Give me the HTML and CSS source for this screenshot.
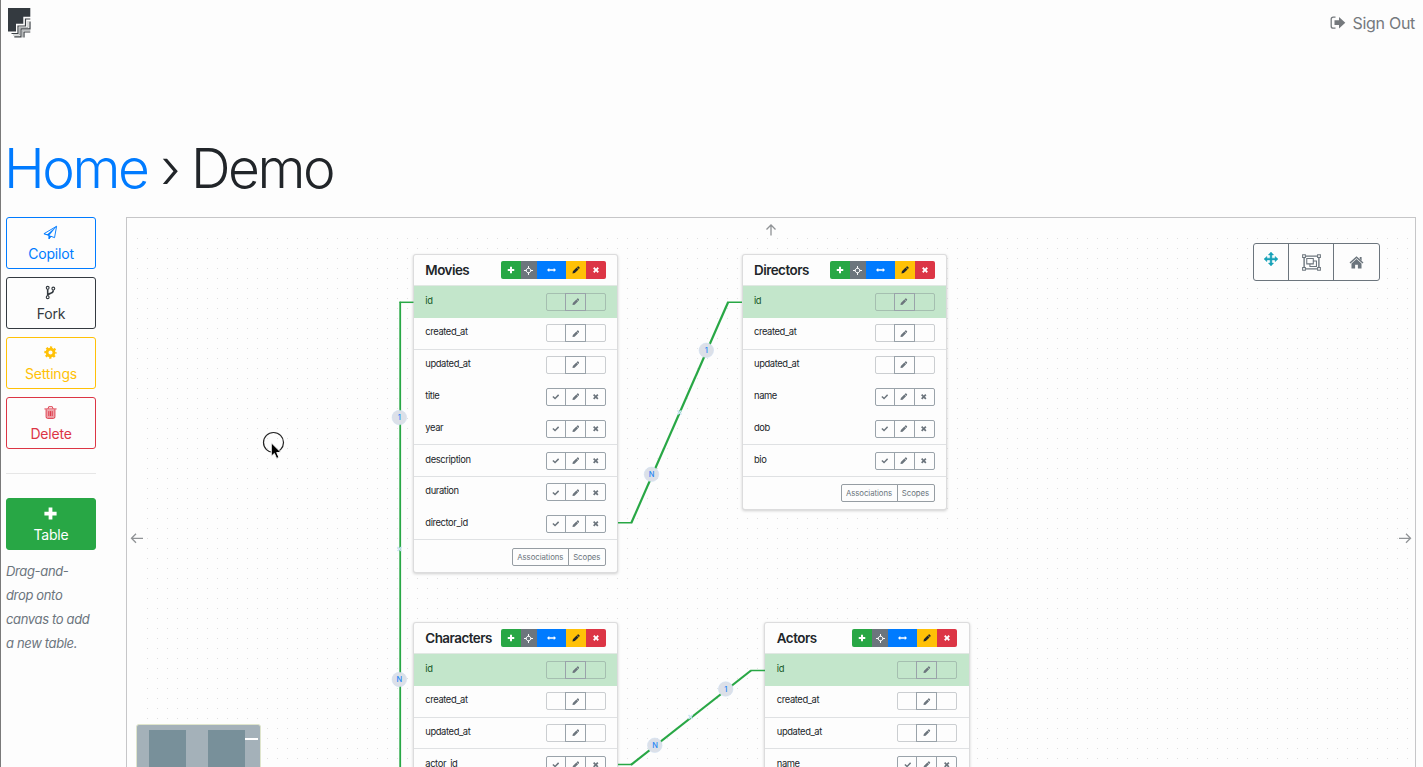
FILE: index.html
```html
<!DOCTYPE html>
<html lang="en">
<head>
<meta charset="utf-8">
<title>Demo</title>
<link rel="stylesheet" href="styles.css">
</head>
<body>
<svg class="sprite" aria-hidden="true">
  <symbol id="plus" viewBox="0 0 16 16"><path d="M6 1.500h4V6h4.500v4H10v4.500H6V10H1.500V6H6z"/></symbol>
  <symbol id="times" viewBox="0 0 16 16"><path d="M4.800 2.200 8 5.400l3.200-3.200 2.600 2.600L10.600 8l3.200 3.200-2.600 2.600L8 10.600l-3.200 3.200-2.600-2.600L5.400 8 2.200 4.800z"/></symbol>
  <symbol id="check" viewBox="0 0 16 16"><path d="M.8 8.500 3 6.200l3.500 3.200L13 2.800l2.300 2.300-8.800 8.800z"/></symbol>
  <symbol id="pencil" viewBox="0 0 16 16"><path d="M1 15l.8-4.600L9.200 3l3.800 3.800-7.400 7.400zM9.800 2.400l1.700-1.600q.9-.7 1.700 0l2 2q.7.800 0 1.700L13.600 6.200z"/></symbol>
  <symbol id="width" viewBox="0 0 20 12"><path d="M0 6 5 1.500V4.600h10V1.500L20 6l-5 4.500V7.400H5v3.100z"/></symbol>
  <symbol id="target" viewBox="0 0 16 16"><path d="M8 0v5M8 11v5M0 8h5M11 8h5M8 2.500 13.500 8 8 13.500 2.500 8z" fill="none" stroke="currentColor" stroke-width="1.700"/></symbol>
</svg>

<header class="topbar">
  <svg class="logo" viewBox="0 0 24 31">
    <path d="M0 0h22.300v8.800h-7v6.900H8V23.500H0z" fill="#343a40"/>
    <path d="M22.300 11h-4.800v7H10v7.500H3.500M22 13.500v7.300h-9V28.800H6.300M22.300 24H16v5.500" fill="none" stroke="#3c4145" stroke-width="1.200"/>
    <path d="M20 13v6.500h-8.500V27H5M22.300 22.400H14.500v7" fill="none" stroke="#85898c" stroke-width=".6"/>
  </svg>
  <a class="signout"><svg viewBox="0 0 16 14"><path d="M5.500 1.200H3.200Q1.200 1.200 1.200 3.200v7q0 2 2 2h2.300" fill="none" stroke="currentColor" stroke-width="1.300"/><path d="M4.500 4.300H9V1l6.300 5.700L9 12.400V9.100H4.500z" fill="currentColor"/></svg>Sign Out</a>
</header>

<h1 class="title"><a>Home</a> <span class="sep">›</span> <span>Demo</span></h1>

<main class="workspace">
  <aside class="sidebar">
    <button class="btn blue"><svg viewBox="0 0 16 16"><path d="M1 9.300 14.500 1.300 12.300 13.500 8.500 12 6.400 14.700V11z" fill="none" stroke="currentColor"/><path d="M1 9.300 4.300 10.500 14 1.800 6.400 11.300V15l2.300-3z" fill="currentColor" stroke="currentColor" stroke-width=".4"/></svg><span>Copilot</span></button>
    <button class="btn dark"><svg viewBox="0 0 16 16"><g fill="none" stroke="currentColor" stroke-width="1.200"><circle cx="5" cy="3" r="1.500"/><circle cx="11" cy="3.800" r="1.500"/><circle cx="5" cy="13" r="1.500"/><path d="M5 4.500v7M11 5.500q0 2.500-3 3.400-3 .6-3 2.600" stroke-width="1.700"/></g></svg><span>Fork</span></button>
    <button class="btn yellow"><svg viewBox="0 0 16 16"><circle cx="8" cy="8" r="3.700" fill="none" stroke="currentColor" stroke-width="3"/><circle cx="8" cy="8" r="5.500" fill="none" stroke="currentColor" stroke-width="2.200" stroke-dasharray="2.300 2.020" stroke-dashoffset="1.150"/></svg><span>Settings</span></button>
    <button class="btn red"><svg viewBox="0 0 16 16"><path d="M3.500 5h9v9h-9z" fill="currentColor" opacity=".45"/><path d="M1.500 4.200h13M3.300 4.500v8q0 1.800 1.400 1.800h6.600q1.400 0 1.400-1.800v-8M5.300 4 6.100 1.800h3.800l.8 2.200M6.200 6.500v5.300M8 6.500v5.300M9.800 6.500v5.300" fill="none" stroke="currentColor"/></svg><span>Delete</span></button>
    <hr>
    <button class="btn solid"><svg viewBox="0 0 16 16"><use href="#plus"/></svg><span>Table</span></button>
    <p class="hint">Drag-and-<br>drop onto<br>canvas to add<br>a new table.</p>
  </aside>

  <section class="canvas">
    <div class="dots"></div><div class="dots edge"></div>

    <article class="card movies">
      <header><h2>Movies</h2><div class="tools"><i><svg><use href="#plus"/></svg></i><i><svg><use href="#target"/></svg></i><i><svg><use href="#width"/></svg></i><i><svg><use href="#pencil"/></svg></i><i><svg><use href="#times"/></svg></i></div></header>
      <div class="row key"><span>id</span><div class="acts off"><i></i><i><svg><use href="#pencil"/></svg></i><i></i></div></div>
      <div class="row line"><span>created_at</span><div class="acts off"><i></i><i><svg><use href="#pencil"/></svg></i><i></i></div></div>
      <div class="row"><span>updated_at</span><div class="acts off"><i></i><i><svg><use href="#pencil"/></svg></i><i></i></div></div>
      <div class="row"><span>title</span><div class="acts"><i><svg><use href="#check"/></svg></i><i><svg><use href="#pencil"/></svg></i><i><svg><use href="#times"/></svg></i></div></div>
      <div class="row line"><span>year</span><div class="acts"><i><svg><use href="#check"/></svg></i><i><svg><use href="#pencil"/></svg></i><i><svg><use href="#times"/></svg></i></div></div>
      <div class="row line"><span>description</span><div class="acts"><i><svg><use href="#check"/></svg></i><i><svg><use href="#pencil"/></svg></i><i><svg><use href="#times"/></svg></i></div></div>
      <div class="row"><span>duration</span><div class="acts"><i><svg><use href="#check"/></svg></i><i><svg><use href="#pencil"/></svg></i><i><svg><use href="#times"/></svg></i></div></div>
      <div class="row line"><span>director_id</span><div class="acts"><i><svg><use href="#check"/></svg></i><i><svg><use href="#pencil"/></svg></i><i><svg><use href="#times"/></svg></i></div></div>
      <footer><b>Associations</b><b>Scopes</b></footer>
    </article>

    <article class="card directors">
      <header><h2>Directors</h2><div class="tools"><i><svg><use href="#plus"/></svg></i><i><svg><use href="#target"/></svg></i><i><svg><use href="#width"/></svg></i><i><svg><use href="#pencil"/></svg></i><i><svg><use href="#times"/></svg></i></div></header>
      <div class="row key"><span>id</span><div class="acts off"><i></i><i><svg><use href="#pencil"/></svg></i><i></i></div></div>
      <div class="row line"><span>created_at</span><div class="acts off"><i></i><i><svg><use href="#pencil"/></svg></i><i></i></div></div>
      <div class="row"><span>updated_at</span><div class="acts off"><i></i><i><svg><use href="#pencil"/></svg></i><i></i></div></div>
      <div class="row"><span>name</span><div class="acts"><i><svg><use href="#check"/></svg></i><i><svg><use href="#pencil"/></svg></i><i><svg><use href="#times"/></svg></i></div></div>
      <div class="row line"><span>dob</span><div class="acts"><i><svg><use href="#check"/></svg></i><i><svg><use href="#pencil"/></svg></i><i><svg><use href="#times"/></svg></i></div></div>
      <div class="row line"><span>bio</span><div class="acts"><i><svg><use href="#check"/></svg></i><i><svg><use href="#pencil"/></svg></i><i><svg><use href="#times"/></svg></i></div></div>
      <footer><b>Associations</b><b>Scopes</b></footer>
    </article>

    <article class="card characters">
      <header><h2>Characters</h2><div class="tools"><i><svg><use href="#plus"/></svg></i><i><svg><use href="#target"/></svg></i><i><svg><use href="#width"/></svg></i><i><svg><use href="#pencil"/></svg></i><i><svg><use href="#times"/></svg></i></div></header>
      <div class="row key"><span>id</span><div class="acts off"><i></i><i><svg><use href="#pencil"/></svg></i><i></i></div></div>
      <div class="row line"><span>created_at</span><div class="acts off"><i></i><i><svg><use href="#pencil"/></svg></i><i></i></div></div>
      <div class="row line"><span>updated_at</span><div class="acts off"><i></i><i><svg><use href="#pencil"/></svg></i><i></i></div></div>
      <div class="row"><span>actor_id</span><div class="acts"><i><svg><use href="#check"/></svg></i><i><svg><use href="#pencil"/></svg></i><i><svg><use href="#times"/></svg></i></div></div>
    </article>

    <article class="card actors">
      <header><h2>Actors</h2><div class="tools"><i><svg><use href="#plus"/></svg></i><i><svg><use href="#target"/></svg></i><i><svg><use href="#width"/></svg></i><i><svg><use href="#pencil"/></svg></i><i><svg><use href="#times"/></svg></i></div></header>
      <div class="row key"><span>id</span><div class="acts off"><i></i><i><svg><use href="#pencil"/></svg></i><i></i></div></div>
      <div class="row line"><span>created_at</span><div class="acts off"><i></i><i><svg><use href="#pencil"/></svg></i><i></i></div></div>
      <div class="row line"><span>updated_at</span><div class="acts off"><i></i><i><svg><use href="#pencil"/></svg></i><i></i></div></div>
      <div class="row"><span>name</span><div class="acts"><i><svg><use href="#check"/></svg></i><i><svg><use href="#pencil"/></svg></i><i><svg><use href="#times"/></svg></i></div></div>
    </article>

    <svg class="links" viewBox="127 218 1288 549">
      <g class="wire">
        <path d="M400.200 767V301.700"/><path class="thin" d="M399.500 302.300H413.500"/>
        <path class="thin" d="M618 522.700H632M727.500 302.300H742"/><path class="slant" d="M631.300 523 728.200 302"/>
        <path class="thin" d="M618 764.500H632M750.500 670.500H765"/><path class="slant" d="M631 764.800 751 670.500"/>
      </g>
      <g class="mark"><path d="M397.500 547l4 4m0-4-4 4M677.500 410.500l4 4m0-4-4 4M688.500 715l4 4m0-4-4 4"/></g>
      <g class="pill">
        <circle cx="399.300" cy="417.500" r="7.300"/><circle cx="399.300" cy="679.500" r="7.300"/>
        <circle cx="706.300" cy="350.300" r="7.300"/><circle cx="651.500" cy="474.300" r="7.300"/>
        <circle cx="725.700" cy="689" r="7.300"/><circle cx="654.800" cy="745.300" r="7.300"/>
      </g>
      <g class="count">
        <text x="399.300" y="420.200">1</text><text x="399.300" y="682.200">N</text>
        <text x="706.300" y="353">1</text><text x="651.700" y="477">N</text>
        <text x="725.900" y="691.700">1</text><text x="655" y="748">N</text>
      </g>
      <g class="arrows"><path d="M771 235.500V225M766.500 229.500l4.500-4.500 4.500 4.500M143 538.300H131.800M136 533.800l-4.500 4.500 4.500 4.500M1399 538.300H1410.200M1406 533.800l4.500 4.500-4.500 4.500"/></g>
      <circle cx="273.500" cy="442.500" r="10" fill="none" stroke="#222" stroke-width="1.200"/>
      <path d="M271.300 442.800v13.400l3.100-2.800 2.200 5 2.300-1-2.200-4.900h4.300z" fill="#000" stroke="#fff" stroke-width=".9"/>
    </svg>

    <div class="toolbar">
      <button class="move"><svg viewBox="0 0 16 16"><path d="M8 0l3 3.300H9v3.700h3.700V5L16 8l-3.300 3V9H9v3.700h2L8 16l-3-3.300h2V9H3.300v2L0 8l3.300-3v2H7V3.300H5z" fill="currentColor" stroke="currentColor" stroke-width=".5"/></svg></button>
      <button class="group"><svg viewBox="0 0 18 16"><g fill="none" stroke="currentColor"><path d="M2 2h14v12H2z" stroke-width="1.300"/><path d="M4.500 4.300h6.200v5H4.500zM10.700 6.500h3v5.200H7.500V9.300"/><path d="M.6.600h2.600v2.600H.6zM14.800.600h2.600v2.600h-2.600zM.6 12.800h2.600v2.600H.6zM14.800 12.800h2.600v2.600h-2.600z" fill="#fdfdfd"/></g></svg></button>
      <button class="home"><svg viewBox="0 0 16 14"><path d="M8 3.200 13.400 8v5.500H9.500V9.300h-3v4.200H2.600V8z" fill="currentColor"/><path d="M1 7.500 8 1.300l7 6.200" fill="none" stroke="currentColor" stroke-width="1.600"/><path d="M11.500 1h2v4l-2-1.800z" fill="currentColor"/></svg></button>
    </div>

    <div class="minimap"><i></i><i></i><b></b></div>
  </section>
</main>
</body>
</html>
```

FILE: styles.css
```css
* { box-sizing: border-box; }
body {
  margin: 0; height: 767px; overflow: hidden;
  border-left: 1px solid #7a7a7a;
  background: #fdfdfd; color: #212529;
  font-family: Inter, "Liberation Sans", sans-serif;
}
.sprite { display: none; }
button { font: inherit; background: none; margin: 0; padding: 0; }

.topbar { display: flex; justify-content: space-between; align-items: flex-start; height: 141px; padding: 8px 8px 0 7px; }
.logo { width: 24px; height: 31px; }
.signout { display: flex; align-items: center; gap: 7px; height: 29px; font-size: 16px; letter-spacing: -.3px; color: #75797d; }
.signout svg { width: 16px; height: 14px; }

.title { margin: 0; height: 76px; padding-left: 3px; font-size: 55px; line-height: 54px; font-weight: 300; letter-spacing: -2.450px; white-space: nowrap; }
.title a { color: #007bff; }

.workspace { display: flex; gap: 30px; height: 550px; padding: 0 7px 0 5px; }
.sidebar { width: 90px; flex: none; }
.btn { display: flex; flex-direction: column; align-items: center; width: 90px; height: 52px; margin-bottom: 8px; padding-top: 7px; border: 1px solid currentColor; border-radius: 3px; font-size: 14px; letter-spacing: -.2px; }
.btn svg { width: 15px; height: 15px; flex: none; margin-right: 1px; }
.btn span { line-height: 27px; }
.blue { color: #007bff; }
.dark { color: #343a40; }
.yellow { color: #ffc107; }
.red { color: #dc3545; }
.solid { background: #28a745; border-color: #28a745; color: #fff; fill: #fff; }
.sidebar hr { margin: 24px 0; border: 0; border-top: 1px solid #e6e6e6; }
.hint { margin: 9px 0 0; font-size: 13px; line-height: 24px; letter-spacing: -.35px; font-style: italic; color: #6c757d; white-space: nowrap; }

.canvas { position: relative; flex: 1; height: 560px; border: 1px solid #c6c6c8; overflow: hidden; }
.dots { position: absolute; left: 15px; right: 6px; top: 15px; bottom: 0; background: radial-gradient(circle at 5.500px 5.500px, #dedede 0, #dedede .6px, transparent 1px) 0 0 / 10px 10px; }
.dots.edge { left: 5px; right: auto; width: 10px; bottom: auto; height: 170px; }

.card { position: absolute; width: 203.500px; background: #fdfdfd; border-radius: 2px; box-shadow: 0 0 0 1px #dcdcdd, 0 1px 3px 1px #cfcfcf; }
.movies { left: 286.800px; top: 37px; height: 317px; }
.directors { left: 615.500px; top: 37px; height: 254px; }
.characters { left: 286.800px; top: 405px; height: 200px; }
.actors { left: 638.300px; top: 405px; height: 200px; }
.card header { display: flex; justify-content: space-between; height: 31px; padding: 6px 11.500px 0; }
.card h2 { margin: 0; font-size: 13.400px; line-height: 18px; font-weight: 600; letter-spacing: -.5px; }
.tools { display: flex; height: 18px; border-radius: 2px; overflow: hidden; color: #fff; fill: currentColor; }
.tools i { display: flex; align-items: center; justify-content: center; width: 20px; background: #28a745; }
.tools svg { width: 8px; height: 8px; }
.tools i:nth-child(2) { width: 16px; background: #6c757d; }
.tools i:nth-child(2) svg { width: 9px; height: 9px; }
.tools i:nth-child(3) { width: 29px; background: #007bff; }
.tools i:nth-child(3) svg { width: 9px; }
.tools i:nth-child(4) { background: #ffc107; color: #212529; }
.tools i:nth-child(5) { background: #dc3545; }
.row { display: flex; justify-content: space-between; height: 31.800px; padding: 6.600px 11.500px 0; border-bottom: 1px solid transparent; font-size: 9.400px; line-height: 16px; letter-spacing: -.4px; }
.row.line { border-bottom-color: #dfe1e3; }
.row.key { background: #c3e6cb; color: #155724; box-shadow: 0 -1px #e1e8e3; }
.acts { display: flex; height: 18px; color: #6c757d; fill: currentColor; }
.acts i { display: flex; align-items: center; justify-content: center; width: 21px; margin-left: -1px; border: 1px solid #9aa3aa; }
.acts i:first-child { border-radius: 2px 0 0 2px; margin-left: 0; width: 20px; }
.acts i:last-child { border-radius: 0 2px 2px 0; }
.acts svg { width: 7.500px; height: 7.500px; }
.off i:first-child, .off i:last-child { border-color: rgba(108, 117, 125, .35); }
.off i:nth-child(2) { z-index: 1; }
.card footer { display: flex; justify-content: flex-end; padding: 7.400px 11.500px 0; font-size: 7.800px; line-height: 17px; letter-spacing: -.05px; color: #6c757d; }
.card footer b { width: 38px; height: 18px; border: 1px solid #969da3; border-radius: 0 2px 2px 0; text-align: center; font-weight: 400; white-space: nowrap; }
.card footer b:first-child { width: 57px; margin-right: -1px; border-radius: 2px 0 0 2px; }

.links { position: absolute; left: 0; top: 0; width: 1288px; height: 549px; }
.wire path { fill: none; stroke: #28a745; stroke-width: 1.800; }
.wire .thin { stroke-width: 1.500; }
.wire .slant { stroke-width: 2.200; }
.mark path { stroke: #c9e4f3; stroke-width: 1.500; }
.pill circle { fill: #dce0e8; stroke: #cddff2; stroke-width: .5; }
.count text { font-size: 7.500px; font-weight: 500; fill: #2786f5; text-anchor: middle; }
.arrows path { fill: none; stroke: #909396; stroke-width: 1.300; }

.toolbar { position: absolute; left: 1126px; top: 25px; display: flex; width: 127px; height: 38px; border: 1px solid #6c757d; border-radius: 3px; background: #fdfdfd; color: #6c757d; }
.toolbar button { display: flex; align-items: center; justify-content: center; border: 0; color: inherit; }
.toolbar .move { width: 34px; padding-bottom: 6px; color: #17a2b8; }
.toolbar .move svg { width: 14px; height: 14px; }
.toolbar .group { width: 45px; border-left: 1px solid #6c757d; }
.toolbar .group svg { width: 19px; height: 17px; }
.toolbar .home { flex: 1; border-left: 1px solid #6c757d; }
.toolbar .home svg { width: 15px; height: 13px; }

.minimap { position: absolute; left: 9px; top: 506px; display: flex; gap: 22px; width: 125px; height: 60px; padding: 5px 12px 0; border: 1px solid #dfe5cc; border-radius: 3px; background: #a4b1b9; }
.minimap i { width: 37px; background: #78909a; }
.minimap b { position: absolute; right: 2px; top: 12.500px; width: 13px; height: 2.500px; background: #fff; }
```
